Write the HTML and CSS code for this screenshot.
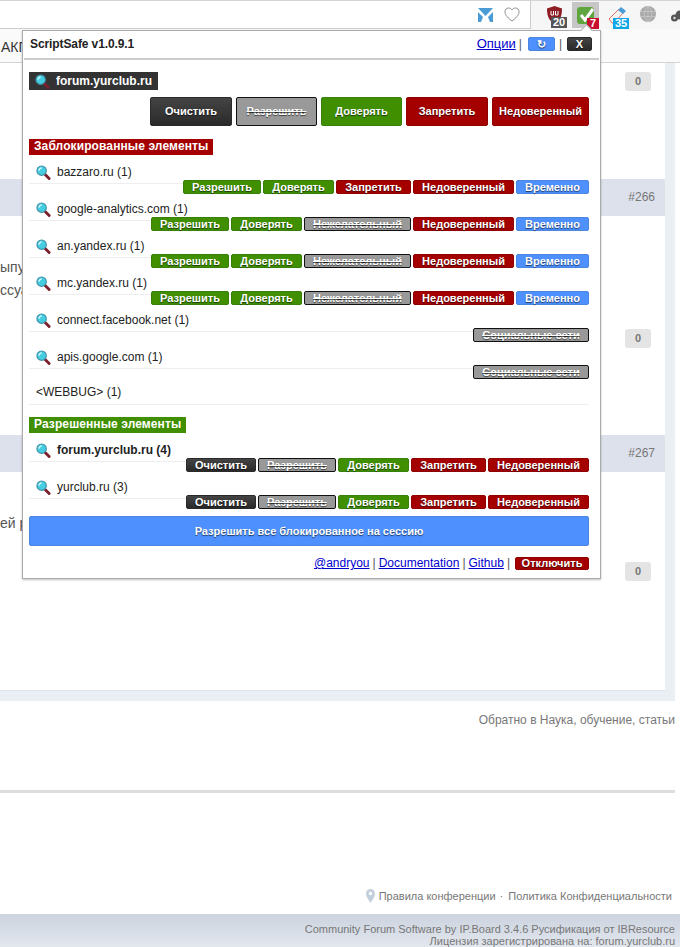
FILE: index.html
```html
<!DOCTYPE html>
<html>
<head>
    <meta charset="utf-8">
    <link rel="stylesheet" href="styles.css">
</head>
<body>
<svg class="defs" width="0" height="0">
    <defs>
        <symbol id="lens" viewBox="0 0 16 16">
            <path d="M10 10.500 L14 14.500" stroke="#7a1f2b" stroke-width="3" stroke-linecap="round"/>
            <circle cx="6" cy="6" r="5" fill="#45cde2" stroke="#3f8fa6" stroke-width="1.200"/>
            <path d="M3.200 6 A2.800 2.800 0 0 1 6 3.200" fill="none" stroke="#d4f7fb" stroke-width="1.400"/>
        </symbol>
    </defs>
</svg>

<div class="toolbar">
    <div class="address">
        <svg class="addr-icon" width="15" height="14" viewBox="0 0 15 14"><path d="M0 0 H15 L7.500 8 Z M0 4 L5 9 L3 14 H0 Z M15 4 L10 9 L12 14 H15 Z" fill="#4a9bd6"/></svg>
        <svg class="addr-icon" width="16" height="15" viewBox="0 0 16 15"><path d="M8 14 C2 9.500 1 7 1 4.800 C1 2.500 2.800 1 4.600 1 C6 1 7.300 1.800 8 3 C8.700 1.800 10 1 11.400 1 C13.200 1 15 2.500 15 4.800 C15 7 14 9.500 8 14 Z" fill="none" stroke="#8a8a8a"/></svg>
    </div>
    <div class="ext ext-ublock">
        <svg width="15" height="18" viewBox="0 0 15 18"><path d="M7.500 0 L15 2.500 C15 10 13 15 7.500 18 C2 15 0 10 0 2.500 Z" fill="#8e1c25"/><path d="M4 5 V9 H6.500 V5 M8.500 5 V9 H11 V5" fill="none" stroke="#fff"/></svg>
        <span class="badge badge-grey">20</span>
    </div>
    <div class="ext ext-safe">
        <svg width="17" height="17" viewBox="0 0 17 17"><rect width="17" height="17" rx="3" fill="#5fa63f"/><path d="M4 8 L8 13 L16 2" fill="none" stroke="#fff" stroke-width="3"/></svg>
        <span class="badge badge-red">7</span>
    </div>
    <div class="ext ext-eraser">
        <svg width="18" height="17" viewBox="0 0 18 17"><path d="M0 12 L10 2 L14 6 L5 16 H3 Z" fill="#f2f2f2" stroke="#d9705f"/><path d="M9 3 L12 0 L17 4 L14 7 Z" fill="#4a9bd6"/></svg>
        <span class="badge badge-blue">35</span>
    </div>
    <svg class="ext-globe" width="16" height="16" viewBox="0 0 16 16"><circle cx="8" cy="8" r="8" fill="#a9a9a9"/><path d="M0 5.500 H16 M0 10.500 H16 M8 0 V16 M8 0 C3 4 3 12 8 16 M8 0 C13 4 13 12 8 16" fill="none" stroke="#c9c9c9" stroke-width=".8"/></svg>
    <svg class="ext-cloud" width="14" height="12" viewBox="0 0 14 12"><circle cx="3.500" cy="8" r="3.500" fill="#555"/><circle cx="9" cy="5" r="4.500" fill="#555"/><circle cx="3.500" cy="8" r="1.200" fill="#ddd"/></svg>
</div>
<div class="bookmarks">АКП</div>

<div class="forum">
    <div class="card">
        <div class="post-body first">
            <div class="likes"><span class="zero">0</span></div>
        </div>
        <div class="post-head">#266</div>
        <div class="post-body">
            <p class="post-text">ыпу</p>
            <p class="post-text">ссуа</p>
            <div class="likes spaced"><span class="zero">0</span></div>
        </div>
        <div class="post-head">#267</div>
        <div class="post-body">
            <p class="post-text">ей ре</p>
            <div class="likes spaced"><span class="zero">0</span></div>
        </div>
    </div>
</div>

<div class="back">Обратно в Наука, обучение, статьи</div>
<div class="sep"></div>
<div class="rules">
    <svg width="9" height="14" viewBox="0 0 9 14"><path d="M4.500 14 C2 10 0 7.500 0 4.500 A4.500 4.500 0 0 1 9 4.500 C9 7.500 7 10 4.500 14 Z M4.500 2.800 A1.700 1.700 0 1 0 4.500 6.200 A1.700 1.700 0 1 0 4.500 2.800 Z" fill="#c3d0dc" fill-rule="evenodd"/></svg>
    <span>Правила конференции</span>
    <span>·</span>
    <span class="rules-last">Политика Конфиденциальности</span>
</div>
<div class="copy">
    <div>Community Forum Software by IP.Board 3.4.6 Русификация от IBResource</div>
    <div>Лицензия зарегистрирована на: forum.yurclub.ru</div>
</div>

<div class="popup">
    <div class="popup-head">
        <b class="title">ScriptSafe v1.0.9.1</b>
        <div class="popup-tools">
            <a href="#" class="options">Опции</a>
            <span class="pipe">|</span>
            <span class="btn blue tool">↻</span>
            <span class="pipe">|</span>
            <span class="btn dark tool close">X</span>
        </div>
    </div>

    <div class="domain-label"><svg><use href="#lens"/></svg>forum.yurclub.ru</div>
    <div class="big-actions">
        <span class="btn dark w82">Очистить</span>
        <span class="btn off">Разрешить</span>
        <span class="btn green">Доверять</span>
        <span class="btn red w82">Запретить</span>
        <span class="btn red wide">Недоверенный</span>
    </div>

    <div class="section red">Заблокированные элементы</div>

    <div class="row">
        <div class="name"><svg><use href="#lens"/></svg>bazzaro.ru (1)</div>
        <div class="actions">
            <span class="btn green a-allow">Разрешить</span>
            <span class="btn green a-trust">Доверять</span>
            <span class="btn red a-deny">Запретить</span>
            <span class="btn red a-untrust">Недоверенный</span>
            <span class="btn blue a-temp">Временно</span>
        </div>
    </div>
    <div class="row">
        <div class="name"><svg><use href="#lens"/></svg>google-analytics.com (1)</div>
        <div class="actions">
            <span class="btn green a-allow">Разрешить</span>
            <span class="btn green a-trust">Доверять</span>
            <span class="btn off a-unwanted">Нежелательный</span>
            <span class="btn red a-untrust">Недоверенный</span>
            <span class="btn blue a-temp">Временно</span>
        </div>
    </div>
    <div class="row">
        <div class="name"><svg><use href="#lens"/></svg>an.yandex.ru (1)</div>
        <div class="actions">
            <span class="btn green a-allow">Разрешить</span>
            <span class="btn green a-trust">Доверять</span>
            <span class="btn off a-unwanted">Нежелательный</span>
            <span class="btn red a-untrust">Недоверенный</span>
            <span class="btn blue a-temp">Временно</span>
        </div>
    </div>
    <div class="row">
        <div class="name"><svg><use href="#lens"/></svg>mc.yandex.ru (1)</div>
        <div class="actions">
            <span class="btn green a-allow">Разрешить</span>
            <span class="btn green a-trust">Доверять</span>
            <span class="btn off a-unwanted">Нежелательный</span>
            <span class="btn red a-untrust">Недоверенный</span>
            <span class="btn blue a-temp">Временно</span>
        </div>
    </div>
    <div class="row">
        <div class="name"><svg><use href="#lens"/></svg>connect.facebook.net (1)</div>
        <div class="actions">
            <span class="btn off a-social">Социальные сети</span>
        </div>
    </div>
    <div class="row">
        <div class="name"><svg><use href="#lens"/></svg>apis.google.com (1)</div>
        <div class="actions">
            <span class="btn off a-social">Социальные сети</span>
        </div>
    </div>
    <div class="row-plain">&lt;WEBBUG&gt; (1)</div>

    <div class="section green">Разрешенные элементы</div>

    <div class="row">
        <div class="name strong"><svg><use href="#lens"/></svg>forum.yurclub.ru (4)</div>
        <div class="actions">
            <span class="btn dark a-clear">Очистить</span>
            <span class="btn off a-allow">Разрешить</span>
            <span class="btn green a-trust">Доверять</span>
            <span class="btn red a-deny">Запретить</span>
            <span class="btn red a-untrust">Недоверенный</span>
        </div>
    </div>
    <div class="row">
        <div class="name"><svg><use href="#lens"/></svg>yurclub.ru (3)</div>
        <div class="actions">
            <span class="btn dark a-clear">Очистить</span>
            <span class="btn off a-allow">Разрешить</span>
            <span class="btn green a-trust">Доверять</span>
            <span class="btn red a-deny">Запретить</span>
            <span class="btn red a-untrust">Недоверенный</span>
        </div>
    </div>

    <div class="btn blue allow-all">Разрешить все блокированное на сессию</div>

    <div class="popup-foot">
        <a href="#">@andryou</a>
        <span class="pipe">|</span>
        <a href="#">Documentation</a>
        <span class="pipe">|</span>
        <a href="#">Github</a>
        <span class="pipe">|</span>
        <span class="btn red a-disable">Отключить</span>
    </div>
</div>
</body>
</html>
```
FILE: styles.css
```css
* {
    box-sizing: border-box;
}
html, body {
    margin: 0;
    padding: 0;
}
body {
    position: relative;
    width: 680px;
    height: 947px;
    overflow: hidden;
    background: #FFFFFF;
    font-family: "Liberation Sans", Arial, sans-serif;
    color: #333333;
}
.defs {
    position: absolute;
}

/* browser chrome */
.toolbar {
    display: flex;
    align-items: flex-start;
    height: 29px;
    overflow: hidden;
    background: #F6F6F6;
    border-top: 1px solid #D4D4D4;
}
.address {
    display: flex;
    flex: none;
    justify-content: flex-end;
    align-items: center;
    gap: 11px;
    width: 531px;
    height: 28px;
    padding-right: 10px;
    background: #FFFFFF;
    border-right: 1px solid #CCCCCC;
    border-bottom: 1px solid #CCCCCC;
}
.ext {
    position: relative;
    flex: none;
}
.ext svg {
    display: block;
}
.ext-ublock {
    margin: 5px 0 0 16px;
    width: 25px;
    height: 23px;
}
.ext-safe {
    margin: 1px 0 0 0;
    width: 27px;
    height: 26px;
    padding: 5px 0 0 5px;
    background: #C6C6C6;
}
.ext-eraser {
    margin: 6px 0 0 10px;
    width: 26px;
    height: 22px;
}
.ext-globe {
    margin: 5px 0 0 5px;
    flex: none;
}
.ext-cloud {
    margin: 9px 0 0 15px;
    flex: none;
}
.badge {
    position: absolute;
    height: 11px;
    padding: 0 2px;
    font-size: 11px;
    line-height: 11px;
    font-weight: bold;
    color: #FFFFFF;
}
.badge-grey {
    left: 4px;
    top: 11px;
    background: #555555;
}
.badge-red {
    left: 15px;
    top: 16px;
    padding: 0 3px;
    background: #C8102E;
}
.badge-blue {
    left: 4px;
    top: 11px;
    background: #0FA6E8;
}
.bookmarks {
    height: 34px;
    padding-left: 1px;
    background: #FAFAFA;
    border-bottom: 1px solid #D4D4D4;
    font-size: 14px;
    line-height: 37px;
}

/* forum page behind the popup */
.forum {
    width: 675px;
    padding: 0 10px 10px 0;
    background: #EAEFF3;
}
.card {
    height: 628px;
    background: #FFFFFF;
    border-bottom: 1px solid #DDE3EA;
}
.post-head {
    height: 37px;
    padding-right: 10px;
    background: #DDE1EC;
    color: #777777;
    font-size: 12px;
    line-height: 37px;
    text-align: right;
}
.post-body {
    padding-top: 40px;
    height: 219px;
}
.post-body.first {
    padding-top: 9px;
    height: 116px;
}
.post-text {
    margin: 0;
    font-size: 14px;
    line-height: 23px;
    color: #555555;
}
.likes {
    display: flex;
    justify-content: flex-end;
    padding-right: 14px;
}
.likes.spaced {
    margin-top: 27px;
}
.zero {
    display: block;
    width: 26px;
    height: 19px;
    border-radius: 3px;
    background: #E4E4E4;
    color: #777777;
    font-size: 11px;
    font-weight: bold;
    line-height: 19px;
    text-align: center;
}
.back {
    width: 675px;
    margin-top: 11px;
    font-size: 12px;
    line-height: 16px;
    color: #777777;
    text-align: right;
}
.sep {
    width: 675px;
    height: 3px;
    margin-top: 62px;
    background: #DDDDDD;
}
.rules {
    display: flex;
    justify-content: flex-end;
    align-items: center;
    gap: 4px;
    width: 672px;
    height: 16px;
    margin-top: 95px;
    font-size: 11px;
    color: #777777;
}
.rules-last {
    margin-left: 1px;
}
.copy {
    height: 34px;
    margin-top: 10px;
    padding: 9px 5px 0 0;
    background: linear-gradient(#CBD3DF, #E3E7EE);
    font-size: 11px;
    line-height: 12px;
    color: #777777;
    text-align: right;
}

/* popup */
.popup {
    position: absolute;
    left: 22px;
    top: 30px;
    width: 579px;
    height: 549px;
    padding: 0 11px 0 6px;
    background: #FFFFFF;
    border: 1px solid #ABABAB;
    box-shadow: 0 1px 2px rgba(0, 0, 0, .25);
    font-size: 12px;
    color: #222222;
}
.popup::before {
    content: "";
    position: absolute;
    right: 9px;
    top: -5px;
    width: 8px;
    height: 8px;
    background: #FFFFFF;
    border-left: 1px solid #ABABAB;
    border-top: 1px solid #ABABAB;
    transform: rotate(45deg);
}
.popup a {
    color: #0000CC;
}
.popup-head {
    display: flex;
    justify-content: space-between;
    align-items: center;
    height: 29px;
    margin: 0 -10px 0 -5px;
    padding: 1px 7px 3px 6px;
    border-bottom: 2px solid #CCCCCC;
}
.title {
    letter-spacing: -.1px;
}
.popup-tools {
    display: flex;
    align-items: center;
}
.options {
    font-size: 13px;
}
.pipe {
    margin: 0 3px;
    color: #555555;
}
.btn {
    display: block;
    flex: none;
    border-radius: 2px;
    border: 1px solid transparent;
    color: #FFFFFF;
    font-size: 11px;
    font-weight: bold;
    text-align: center;
    text-shadow: 0 1px 1px rgba(0, 0, 0, .6);
}
.dark {
    background: linear-gradient(#444444, #2A2A2A);
    border-color: #2A2A2A;
}
.green {
    background: #3F8F00;
    border-color: #38800A;
}
.red {
    background: #A40000;
    border-color: #900000;
}
.blue {
    background: #4D90FE;
    border-color: #4A85E0;
}
.off {
    background: #999999;
    border-color: #111111;
    text-decoration: line-through;
}
.tool {
    width: 27px;
    height: 14px;
    margin: 0 1px 0 3px;
    line-height: 12px;
}
.close {
    width: 25px;
    margin: 0 0 0 2px;
}
.domain-label {
    display: flex;
    align-items: center;
    width: 129px;
    height: 18px;
    margin-top: 12px;
    padding-left: 6px;
    background: #333333;
    color: #FFFFFF;
    font-weight: bold;
}
.domain-label svg, .name svg {
    flex: none;
    width: 15px;
    height: 15px;
    margin-right: 6px;
}
.big-actions {
    display: flex;
    justify-content: flex-end;
    gap: 4px;
    margin-top: 7px;
}
.big-actions .btn {
    width: 81px;
    height: 29px;
    line-height: 27px;
}
.big-actions .w82 {
    width: 82px;
}
.big-actions .wide {
    width: 97px;
}
.section {
    width: fit-content;
    margin-top: 12px;
    padding: 0 5px;
    height: 16px;
    border-radius: 0;
    font-size: 12px;
    font-weight: bold;
    line-height: 15px;
    letter-spacing: .1px;
    color: #FFFFFF;
}
.big-actions + .section {
    margin-top: 13px;
}
.row {
    height: 37px;
}
.name {
    display: flex;
    align-items: center;
    height: 29px;
    padding: 6px 0 0 7px;
    border-bottom: 1px solid #EEEEEE;
}
.strong {
    font-weight: bold;
}
.actions {
    display: flex;
    justify-content: flex-end;
    gap: 2px;
    margin-top: -4px;
}
.actions .btn {
    height: 14px;
    line-height: 12px;
}
.a-allow { width: 78px; }
.a-trust { width: 71px; }
.a-deny { width: 75px; }
.a-unwanted { width: 107px; }
.a-untrust { width: 101px; }
.a-temp { width: 73px; }
.a-social { width: 116px; }
.a-clear { width: 70px; }
.row-plain {
    height: 28px;
    padding: 7px 0 0 7px;
    line-height: 16px;
    border-bottom: 1px solid #EEEEEE;
}
.allow-all {
    height: 30px;
    margin-top: 9px;
    line-height: 28px;
}
.popup-foot {
    display: flex;
    justify-content: flex-end;
    align-items: center;
    margin-top: 10px;
}
.a-disable {
    width: 74px;
    height: 13px;
    margin-left: 2px;
    line-height: 11px;
}
```
